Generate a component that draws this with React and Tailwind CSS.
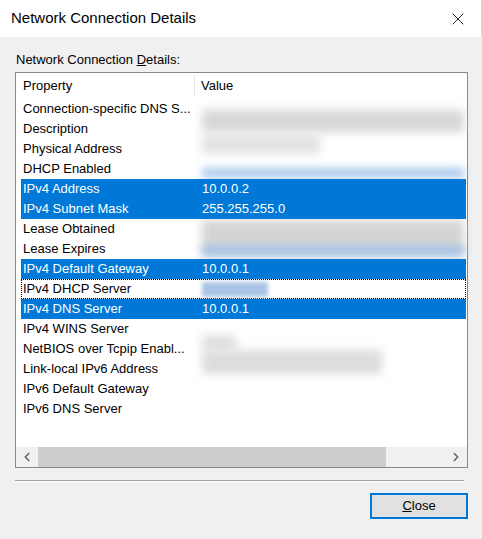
// Network Connection Details dialog (Windows-style property list).
import { X, ChevronLeft, ChevronRight } from "lucide-react";

const rows = [
  { name: "Connection-specific DNS S...", value: "" },
  { name: "Description", value: "" },
  { name: "Physical Address", value: "" },
  { name: "DHCP Enabled", value: "" },
  { name: "IPv4 Address", value: "10.0.0.2", selected: true },
  { name: "IPv4 Subnet Mask", value: "255.255.255.0", selected: true },
  { name: "Lease Obtained", value: "" },
  { name: "Lease Expires", value: "" },
  { name: "IPv4 Default Gateway", value: "10.0.0.1", selected: true },
  { name: "IPv4 DHCP Server", value: "", focused: true },
  { name: "IPv4 DNS Server", value: "10.0.0.1", selected: true },
  { name: "IPv4 WINS Server", value: "" },
  { name: "NetBIOS over Tcpip Enabl...", value: "" },
  { name: "Link-local IPv6 Address", value: "" },
  { name: "IPv6 Default Gateway", value: "" },
  { name: "IPv6 DNS Server", value: "" },
];

function Blur({ className }) {
  return <div className={`absolute ${className}`} />;
}

export default function App() {
  return (
    <div
      className="flex h-[539px] w-[482px] flex-col bg-[#f0f0f0] text-[13px] text-black"
      style={{ fontFamily: '"Liberation Sans", Arial, sans-serif' }}
    >
      {/* title bar */}
      <div className="flex h-[37px] shrink-0 items-center justify-between border-r border-[#d8d8d8] bg-white pl-[11px] pr-[13px]">
        <span className="text-[15px]">Network Connection Details</span>
        <X className="h-[20px] w-[20px]" strokeWidth={1} />
      </div>

      <div className="flex flex-1 flex-col px-[15px]">
        <div className="mt-[15px] h-[16px] leading-[16px] pl-[1px]">
          Network Connection <span className="underline">D</span>etails:
        </div>

        {/* list view */}
        <div className="mt-[4px] flex h-[396px] w-[453px] flex-col border border-[#828790] bg-white">
          <div className="flex h-[25px] shrink-0 items-center">
            <div className="flex h-[22px] w-[179px] items-center border-r border-[#e5e5e5] pl-[7px]">Property</div>
            <div className="pl-[6px]">Value</div>
          </div>

          <div className="relative pt-[1px]">
            {/* blurred, unreadable values */}
            <Blur className="left-[186px] top-[12px] h-[22px] w-[262px] bg-[#d6d6d6] blur-[5px]" />
            <Blur className="left-[186px] top-[36px] h-[20px] w-[118px] bg-[#e2e2e2] blur-[5px]" />
            <Blur className="left-[186px] top-[70px] h-[10px] w-[262px] bg-[#a8c8ec] blur-[4px]" />
            <Blur className="left-[186px] top-[122px] h-[34px] w-[262px] bg-[#d4d4d4] blur-[5px]" />
            <Blur className="left-[186px] top-[148px] h-[10px] w-[262px] bg-[#9fbfe4] blur-[4px]" />
            <Blur className="left-[186px] top-[238px] h-[14px] w-[34px] bg-[#dcdcdc] blur-[5px]" />
            <Blur className="left-[186px] top-[252px] h-[24px] w-[180px] bg-[#dcdcdc] blur-[5px]" />

            {rows.map((r) => (
              <div
                key={r.name}
                className={`relative ml-[5px] mr-[1px] flex h-[20px] items-center ${
                  r.selected ? "bg-[#0078d7] text-white" : ""
                } ${r.focused ? "outline outline-1 -outline-offset-1 outline-dotted outline-black" : ""}`}
              >
                <div className="w-[179px] shrink-0 truncate pl-[2px]">{r.name}</div>
                <div className="pl-[2px]">
                  {r.focused ? (
                    <div className="h-[15px] w-[66px] bg-[#a9c4e4] blur-[2px]" />
                  ) : (
                    r.value
                  )}
                </div>
              </div>
            ))}
          </div>

          <div className="flex-1" />

          {/* horizontal scrollbar */}
          <div className="flex h-[20px] shrink-0 items-center bg-[#f0f0f0]">
            <div className="flex h-full w-[22px] items-center justify-center text-[#606060]">
              <ChevronLeft className="h-[14px] w-[14px]" strokeWidth={2.6} />
            </div>
            <div className="h-full w-[348px] bg-[#cdcdcd]" />
            <div className="flex-1" />
            <div className="flex h-full w-[22px] items-center justify-center text-[#606060]">
              <ChevronRight className="h-[14px] w-[14px]" strokeWidth={2.6} />
            </div>
          </div>
        </div>

        {/* separator */}
        <div className="mt-[12px] w-[449px] border-t border-b border-t-[#a0a0a0] border-b-white" />

        <div className="mt-[11px] flex justify-end">
          <button className="-mr-[1px] flex h-[26px] w-[98px] items-center justify-center border-2 border-[#0078d7] bg-[#e1e1e1]">
            <span>
              <span className="underline">C</span>lose
            </span>
          </button>
        </div>
      </div>
    </div>
  );
}
